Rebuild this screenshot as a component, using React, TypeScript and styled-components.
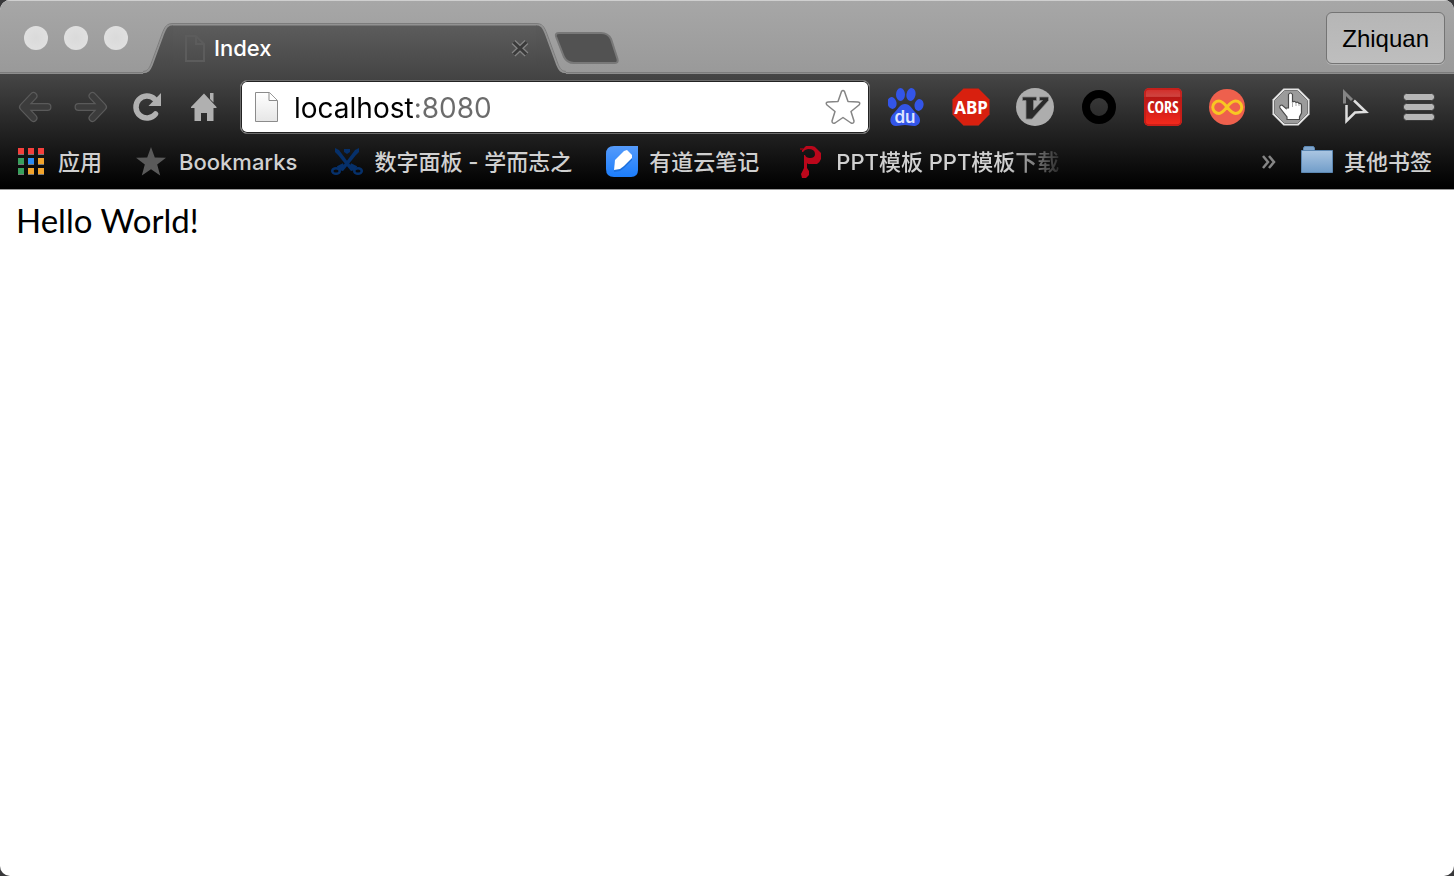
import React from "react";
import styled, { createGlobalStyle } from "styled-components";

const UI_FONT = `Inter, "Noto Sans CJK SC", sans-serif`;

const GlobalStyle = createGlobalStyle`
  *, *::before, *::after { box-sizing: border-box; }
  body { margin: 0; background: #38383a; }
  button, input { font: inherit; color: inherit; margin: 0; }
  svg { display: block; flex: none; }
`;

const Window = styled.div`
  display: flex;
  flex-direction: column;
  min-height: 100vh;
  border-radius: 10px;
  overflow: hidden;
  background: #fff;
  font-family: ${UI_FONT};
`;

const TitleBar = styled.header`
  display: flex;
  align-items: flex-end;
  height: 74px;
  padding: 0 9px 0 24px;
  background: linear-gradient(#a7a7a7, #999);
  box-shadow: inset 0 1px #cfcfcf, inset 0 -1px #8e8e8e, inset 0 -2px #7c7c7c;
`;

const WindowControls = styled.div`
  display: flex;
  align-self: flex-start;
  gap: 16px;
  padding-top: 26px;
  margin-right: 15px;
`;

const WindowDot = styled.button`
  width: 24px;
  height: 24px;
  padding: 0;
  border: 0;
  border-radius: 50%;
  background: radial-gradient(#dadada, #e2e2e2);
`;

const Tab = styled.div`
  display: flex;
  flex: 0 1 423px;
  min-width: 0;
  height: 51px;
`;

const TabBody = styled.div`
  display: flex;
  flex: 1;
  align-items: center;
  min-width: 0;
  padding: 0 7px 2px 12px;
  border-top: 1px solid #7c7c7c;
  background: linear-gradient(#929292 0 1px, #5c5c5c 2px, #464646);
`;

const TabTitle = styled.span`
  flex: 1;
  margin-left: 9px;
  overflow: hidden;
  white-space: nowrap;
  color: #fff;
  font-size: 22px;
  line-height: 28px;
  font-weight: 500;
`;

const BareButton = styled.button`
  display: flex;
  align-items: center;
  justify-content: center;
  padding: 0;
  border: 0;
  background: none;
`;

const NewTab = styled(BareButton)`
  align-self: flex-start;
  margin: 31px auto 0 -12px;
`;

const ProfileButton = styled.button`
  align-self: flex-start;
  height: 52px;
  margin-top: 12px;
  padding: 2px 15px 0;
  border: 1px solid #747474;
  border-radius: 6px;
  background: linear-gradient(#b6b6b6, #bebebe);
  box-shadow: 0 1px #b4b4b4;
  color: #000;
  font-family: "Liberation Sans", sans-serif;
  font-size: 24px;
`;

const Chrome = styled.div`
  background: linear-gradient(#464646, #000 113px);
  border-bottom: 1px solid #999;
`;

const Toolbar = styled.div`
  display: flex;
  align-items: center;
  gap: 18px;
  height: 64px;
  padding: 2px 16px 0 18px;
`;

const NavGroup = styled.nav`
  display: flex;
  gap: 20px;
`;

const Extensions = styled.div`
  display: flex;
  gap: 26px;
`;

const AddressBar = styled.form`
  display: flex;
  flex: 1;
  align-items: center;
  min-width: 0;
  height: 54px;
  padding: 0 8px 0 14px;
  border: 1px solid #6c6c6c;
  border-radius: 7px;
  background: #fff;
  box-shadow: inset 0 0 0 1px #222;
`;

const AddressInput = styled.input`
  flex: 1;
  min-width: 0;
  height: 36px;
  margin-left: 15px;
  padding: 2px 0 0;
  border: 0;
  outline: 0;
  font-size: 28px;
  color: transparent;
  caret-color: #000;
  background: linear-gradient(90deg, #000 119px, #6b6b6b 119px);
  background-clip: text;
  -webkit-background-clip: text;
`;

const BookmarksBar = styled.nav`
  display: flex;
  align-items: center;
  gap: 34px;
  height: 51px;
  padding: 0 22px 3px 15px;
`;

const Bookmark = styled.a<{ $fade?: boolean }>`
  display: flex;
  align-items: center;
  gap: 11px;
  white-space: nowrap;
  color: #d0d0d0;
  font-size: 22px;
  line-height: 32px;
  font-weight: 500;
  text-decoration: none;
  ${(p) =>
    p.$fade &&
    `width: 276px; overflow: hidden;
     mask-image: linear-gradient(90deg, #000 214px, transparent);`}
`;

const Overflow = styled(BareButton)`
  margin: 0 -10px 0 auto;
`;

const Page = styled.main`
  flex: 1;
  padding: 8px 16px;
  color: #000;
  font-family: "Century Gothic", Lato, sans-serif;
  font-size: 33px;
  line-height: 44px;
`;

const DocIcon = () => (
  <svg width="24" height="32" viewBox="0 0 24 32">
    <defs>
      <linearGradient id="doc" x2="0" y2="1">
        <stop stopColor="#fff" />
        <stop offset="1" stopColor="#e6e6e6" />
      </linearGradient>
    </defs>
    <path d="M.5 1.500h14l8 8v21H.5z" fill="url(#doc)" stroke="#8b8b8b" />
    <path d="M14 1.500v8h8" fill="#fff" stroke="#8b8b8b" />
  </svg>
);

const STAR = "M15 0l3.800 10.500 11.200.3-8.800 6.800 3 10.900-9.200-6.200-9.200 6.200 3-10.900L0 10.800l11.200-.3z";

const APP_COLORS = ["#f5403c", "#f5403c", "#f5403c", "#38a05c", "#2c8cf4", "#f2a42c", "#38a05c", "#f2a42c", "#f2a42c"];

const OCTAGON = "M11.500.5h15l11 11v15l-11 11h-15l-11-11v-15z";

const ArrowIcon = ({ flip = false }) => (
  <svg width="36" height="34" viewBox="0 0 36 34">
    <g
      transform={flip ? "translate(34 0) scale(-1 1)" : undefined}
      fill="none"
      strokeLinecap="round"
      strokeLinejoin="round"
    >
      <path d="M29.500 17H5.500M15.500 6L5 17l10.500 11" stroke="#5a5a5a" strokeWidth="8" />
      <path d="M29.500 17H5.500M15.500 6L5 17l10.500 11" stroke="#3c3c3c" strokeWidth="5.500" />
    </g>
  </svg>
);

const TabEdge = ({ flip = false }) => (
  <svg width="30" height="51" viewBox="0 0 30 51">
    <defs>
      <linearGradient id="tabfill" x1="0" y1="0" x2="0" y2="51" gradientUnits="userSpaceOnUse">
        <stop stopColor="#5c5c5c" />
        <stop offset="1" stopColor="#464646" />
      </linearGradient>
    </defs>
    <g transform={flip ? "translate(30 0) scale(-1 1)" : undefined}>
      <path d="M0 51v-1C5 50 7 47 9 42L20 12C23 4 25 1.500 30 1.500V51z" fill="url(#tabfill)" />
      <path d="M0 49.500C5 49.500 7 47 9 42L20 12C23 4 25 1.500 30 1.500" fill="none" stroke="#929292" strokeWidth="1.500" />
      <path d="M-1 48.500C4 48.500 6 46 8 41L19 11C22 3 24 .5 30 .5" fill="none" stroke="#7c7c7c" />
    </g>
  </svg>
);

export default function App() {
  return (
    <>
      <GlobalStyle />
      <Window>
        <TitleBar>
          <WindowControls>
            <WindowDot aria-label="Close window" />
            <WindowDot aria-label="Minimize window" />
            <WindowDot aria-label="Zoom window" />
          </WindowControls>
          <Tab>
            <TabEdge />
            <TabBody>
              <svg width="20" height="27" viewBox="0 0 20 27">
                <path d="M1 1h10l8 8v17H1zM11 1v8h8" fill="none" stroke="#5c5c5c" strokeWidth="2" />
              </svg>
              <TabTitle>Index</TabTitle>
              <BareButton aria-label="Close tab">
                <svg width="18" height="18" viewBox="0 0 18 18">
                  <path d="M2.500 3l13 12.500M15.500 3l-13 12.500" stroke="#858585" strokeWidth="5.500" />
                  <path d="M2.500 3l13 12.500M15.500 3l-13 12.500" stroke="#3a3a3a" strokeWidth="3" />
                </svg>
              </BareButton>
            </TabBody>
            <TabEdge flip />
          </Tab>
          <NewTab aria-label="New tab">
            <svg width="66" height="34" viewBox="0 0 66 34">
              <path
                d="M5 2H47Q54 2 57 8L63.500 28Q64.500 32 61 32H20Q13 32 10 26L2 5.500Q1 2 5 2z"
                fill="#525252"
                stroke="#787878"
                strokeWidth="2"
              />
            </svg>
          </NewTab>
          <ProfileButton>Zhiquan</ProfileButton>
        </TitleBar>

        <Chrome>
          <Toolbar>
            <NavGroup aria-label="Navigation">
              <BareButton aria-label="Back">
                <ArrowIcon />
              </BareButton>
              <BareButton aria-label="Forward">
                <ArrowIcon flip />
              </BareButton>
              <BareButton aria-label="Reload">
                <svg width="36" height="34" viewBox="0 0 36 34">
                  <path d="M25.500 24A11 11 0 1 1 24.500 9" fill="none" stroke="#b0b0b0" strokeWidth="5.500" strokeLinecap="round" />
                  <path d="M31 3v13H18.500z" fill="#b0b0b0" />
                </svg>
              </BareButton>
              <BareButton aria-label="Home">
                <svg width="36" height="34" viewBox="0 0 36 34">
                  <path d="M18 3.500L30.500 17v1H27.500v13H21v-8h-6v8H8.500V18H5v-1z" fill="#b0b0b0" />
                  <path d="M24 3h3.500v9.500L24 9z" fill="#b0b0b0" />
                </svg>
              </BareButton>
            </NavGroup>
            <AddressBar onSubmit={(e) => e.preventDefault()}>
              <DocIcon />
              <AddressInput aria-label="Address" defaultValue="localhost:8080" />
              <BareButton type="button" aria-label="Bookmark this page">
                <svg width="36" height="36" viewBox="0 0 36 36">
                  <path
                    d="M16.500 2.500Q18 .5 19.500 2.500L23 12.500 33 13Q36 13.500 34 16L26 22.500 29 32Q29 35 26 34L18 28.500 10 34Q7 35 7 32L10 22.500 2 16Q0 13.500 3 13L13 12.500z"
                    fill="#fff"
                    stroke="#858585"
                    strokeWidth="1.500"
                    strokeLinejoin="round"
                  />
                </svg>
              </BareButton>
            </AddressBar>
            <Extensions>
              <BareButton aria-label="Baidu">
                <svg width="38" height="38" viewBox="0 0 38 38">
                  <g fill="#3355e8">
                    <ellipse cx="4" cy="15" rx="4.500" ry="6" transform="rotate(-12 4 15)" />
                    <ellipse cx="12.500" cy="6.500" rx="4.500" ry="6.500" />
                    <ellipse cx="23" cy="6.500" rx="4.500" ry="6.500" transform="rotate(12 23 6.500)" />
                    <ellipse cx="31" cy="17" rx="4.500" ry="6" transform="rotate(12 31 17)" />
                    <path d="M17 16c5 0 7 5 11 9 7 6 4 13-2 13-4 0-5-1-9-1s-5 1-9 1c-6 0-8-8-2-13 4-4 6-9 11-9z" />
                  </g>
                  <text x="17" y="35" textAnchor="middle" fill="#dfe5ff" fontSize="17" fontWeight="600">du</text>
                </svg>
              </BareButton>
              <BareButton aria-label="Adblock Plus">
                <svg width="38" height="38" viewBox="0 0 38 38">
                  <path d={OCTAGON} fill="#d8200f" stroke="#8d2b22" strokeWidth=".5" />
                  <text x="19" y="26" textAnchor="middle" fill="#fff" fontFamily="Noto Sans" fontSize="17" fontWeight="700">ABP</text>
                </svg>
              </BareButton>
              <BareButton aria-label="Vim keys">
                <svg width="38" height="38" viewBox="0 0 38 38">
                  <circle cx="19" cy="19" r="19" fill="#adadad" />
                  <path d="M6.500 9h14v3.500h-3v9.500l9-9.500h-3V9h9v3.500L16 31h-6V12.500H6.500z" fill="#292929" stroke="#858585" strokeWidth=".8" />
                </svg>
              </BareButton>
              <BareButton aria-label="Ring">
                <svg width="38" height="38" viewBox="0 0 38 38">
                  <circle cx="19" cy="19" r="13" fill="none" stroke="#000" strokeWidth="8" />
                </svg>
              </BareButton>
              <BareButton aria-label="CORS">
                <svg width="38" height="38" viewBox="0 0 38 38">
                  <defs>
                    <linearGradient id="cors" x2="0" y2="1">
                      <stop stopColor="#d32a26" />
                      <stop offset=".22" stopColor="#cf4440" />
                      <stop offset=".25" stopColor="#b81715" />
                      <stop offset="1" stopColor="#f72b1d" />
                    </linearGradient>
                  </defs>
                  <rect width="38" height="38" rx="5" fill="url(#cors)" />
                  <rect x="1" y="1" width="36" height="36" rx="4" fill="none" stroke="#c01c18" strokeWidth="1.500" />
                  <text x="19" y="25" textAnchor="middle" fill="#fff" fontFamily="Open Sans Condensed, Liberation Sans Narrow, sans-serif" fontSize="16" fontWeight="700">CORS</text>
                </svg>
              </BareButton>
              <BareButton aria-label="Infinity">
                <svg width="38" height="38" viewBox="0 0 38 38">
                  <circle cx="19" cy="19" r="18" fill="#ee604d" />
                  <path
                    d="M19 19C15 14 13 13 11 13a6 6 0 0 0 0 12.500C13 25.500 15 24 19 19s6-6 8.500-6a6 6 0 0 1 0 12.500C25 25.500 23 24 19 19z"
                    fill="none"
                    stroke="#f8c723"
                    strokeWidth="3"
                  />
                </svg>
              </BareButton>
              <BareButton aria-label="Blocker">
                <svg width="38" height="38" viewBox="0 0 38 38">
                  <path d={OCTAGON} fill="#e4e4e4" />
                  <path d="M12.500 2.500h13l10 10v13l-10 10h-13l-10-10v-13z" fill="#9b9b9b" stroke="#777" />
                  <path
                    d="M16.500 20V6.500q2-3 4 0V14q2-1.500 3.500.5 2-1 3 1 2.500-.5 2.500 2V25l-2 4v2.500H15V29l-7-9q-1-3 2-3l4 3.500V20z"
                    fill="#fff"
                    stroke="#4a4a4a"
                    strokeWidth="1.200"
                  />
                  <path d="M20.500 14v5M24 15v3M27 16v2" stroke="#aaa" />
                </svg>
              </BareButton>
              <BareButton aria-label="Pointer">
                <svg width="38" height="38" viewBox="0 0 38 38">
                  <path d="M8.500 15.500V4.500l7.500 7.500" fill="none" stroke="#858585" strokeWidth="3" />
                  <path d="M18 12.500L30 24l-11 .5L10.500 33V17" fill="none" stroke="#dedede" strokeWidth="2.500" />
                </svg>
              </BareButton>
              <BareButton aria-label="Menu">
                <svg width="38" height="38" viewBox="0 0 38 38">
                  <g fill="#b6b6b6" stroke="#3a3a3a">
                    <rect x="3.500" y="5.500" width="31" height="7" rx="3" />
                    <rect x="3.500" y="15.500" width="31" height="7" rx="3" />
                    <rect x="3.500" y="25.500" width="31" height="7" rx="3" />
                  </g>
                </svg>
              </BareButton>
            </Extensions>
          </Toolbar>

          <BookmarksBar aria-label="Bookmarks">
            <Bookmark href="#apps">
              <svg width="32" height="32" viewBox="0 0 32 32">
                {APP_COLORS.map((color, i) => {
                  const x = 3 + (i % 3) * 10;
                  const y = 2 + Math.floor(i / 3) * 10;
                  return (
                    <g key={i}>
                      <rect x={x} y={y} width="6" height="7" fill="#777" />
                      <rect x={x} y={y} width="6" height="6" fill={color} />
                    </g>
                  );
                })}
              </svg>
              应用
            </Bookmark>
            <Bookmark href="#bookmarks">
              <svg width="32" height="32" viewBox="0 0 32 32">
                <path transform="translate(0 1)" d={STAR} fill="#5a5a5a" />
              </svg>
              Bookmarks
            </Bookmark>
            <Bookmark href="#panel">
              <svg width="32" height="32" viewBox="0 0 32 32">
                <g fill="#06306a">
                  <path d="M4 2l4 2 9 12 7 8-4 1-5-6L7 9 4 6z" />
                  <path d="M28 2l-4 2-9 12-7 8 4 1 5-6 8-10 3-3z" />
                  <path d="M13 3h6v3l-3 2-3-2z" />
                </g>
                <g fill="none" stroke="#06306a" strokeWidth="2.500">
                  <ellipse cx="5" cy="25" rx="3.800" ry="2.800" />
                  <ellipse cx="27" cy="25" rx="3.800" ry="2.800" />
                  <path d="M7 22.500l6-3M25 22.500l-6-3" strokeWidth="5" />
                </g>
              </svg>
              数字面板 - 学而志之
            </Bookmark>
            <Bookmark href="#notes">
              <svg width="32" height="32" viewBox="0 0 32 32">
                <defs>
                  <linearGradient id="note" x2="0" y2="1">
                    <stop stopColor="#559bfb" />
                    <stop offset="1" stopColor="#1c7dfb" />
                  </linearGradient>
                </defs>
                <path d="M8 0h24v24q0 7-7 7H8q-8 0-8-8V8q0-8 8-8z" fill="url(#note)" />
                <path d="M9 16l9-9 3-1 5 5v3L18 22l-4 3-6 1z" fill="#1b6fdc" />
                <path d="M9 14l9-9 3-1 5 5v3L18 20l-4 3-6 1z" fill="#fff" />
              </svg>
              有道云笔记
            </Bookmark>
            <Bookmark href="#ppt" $fade>
              <svg width="32" height="32" viewBox="0 0 32 32">
                <path
                  d="M13 0h6q3 0 5 3l4 4v6q-1 3-4 5h-9l-1-1v5l2 3v4l-3 3H9l-1-4 3-6V9h1q1 3 5 3 5 0 5-4 0-5-7-5l-3 1-2 2H9V4z"
                  fill="#bb071b"
                />
                <path d="M7 2h3v2H7z" fill="#790612" />
              </svg>
              PPT模板 PPT模板下载
            </Bookmark>
            <Overflow aria-label="More bookmarks">
              <svg width="16" height="16" viewBox="0 0 16 16">
                <path d="M2 2l5 6-5 6M8 2l5 6-5 6" fill="none" stroke="#858585" strokeWidth="2.500" />
              </svg>
            </Overflow>
            <Bookmark href="#other">
              <svg width="32" height="32" viewBox="0 0 32 32">
                <defs>
                  <linearGradient id="folder" x2="0" y2="1">
                    <stop stopColor="#abc6e2" />
                    <stop offset="1" stopColor="#719dc9" />
                  </linearGradient>
                </defs>
                <path d="M2.500 6V2l1-1.500h9l1 1.500v4z" fill="#7fa5cd" stroke="#5c87b2" />
                <path d="M.5 4.500h31v22H.5z" fill="url(#folder)" stroke="#5c87b2" />
              </svg>
              其他书签
            </Bookmark>
          </BookmarksBar>
        </Chrome>

        <Page>Hello World!</Page>
      </Window>
    </>
  );
}
